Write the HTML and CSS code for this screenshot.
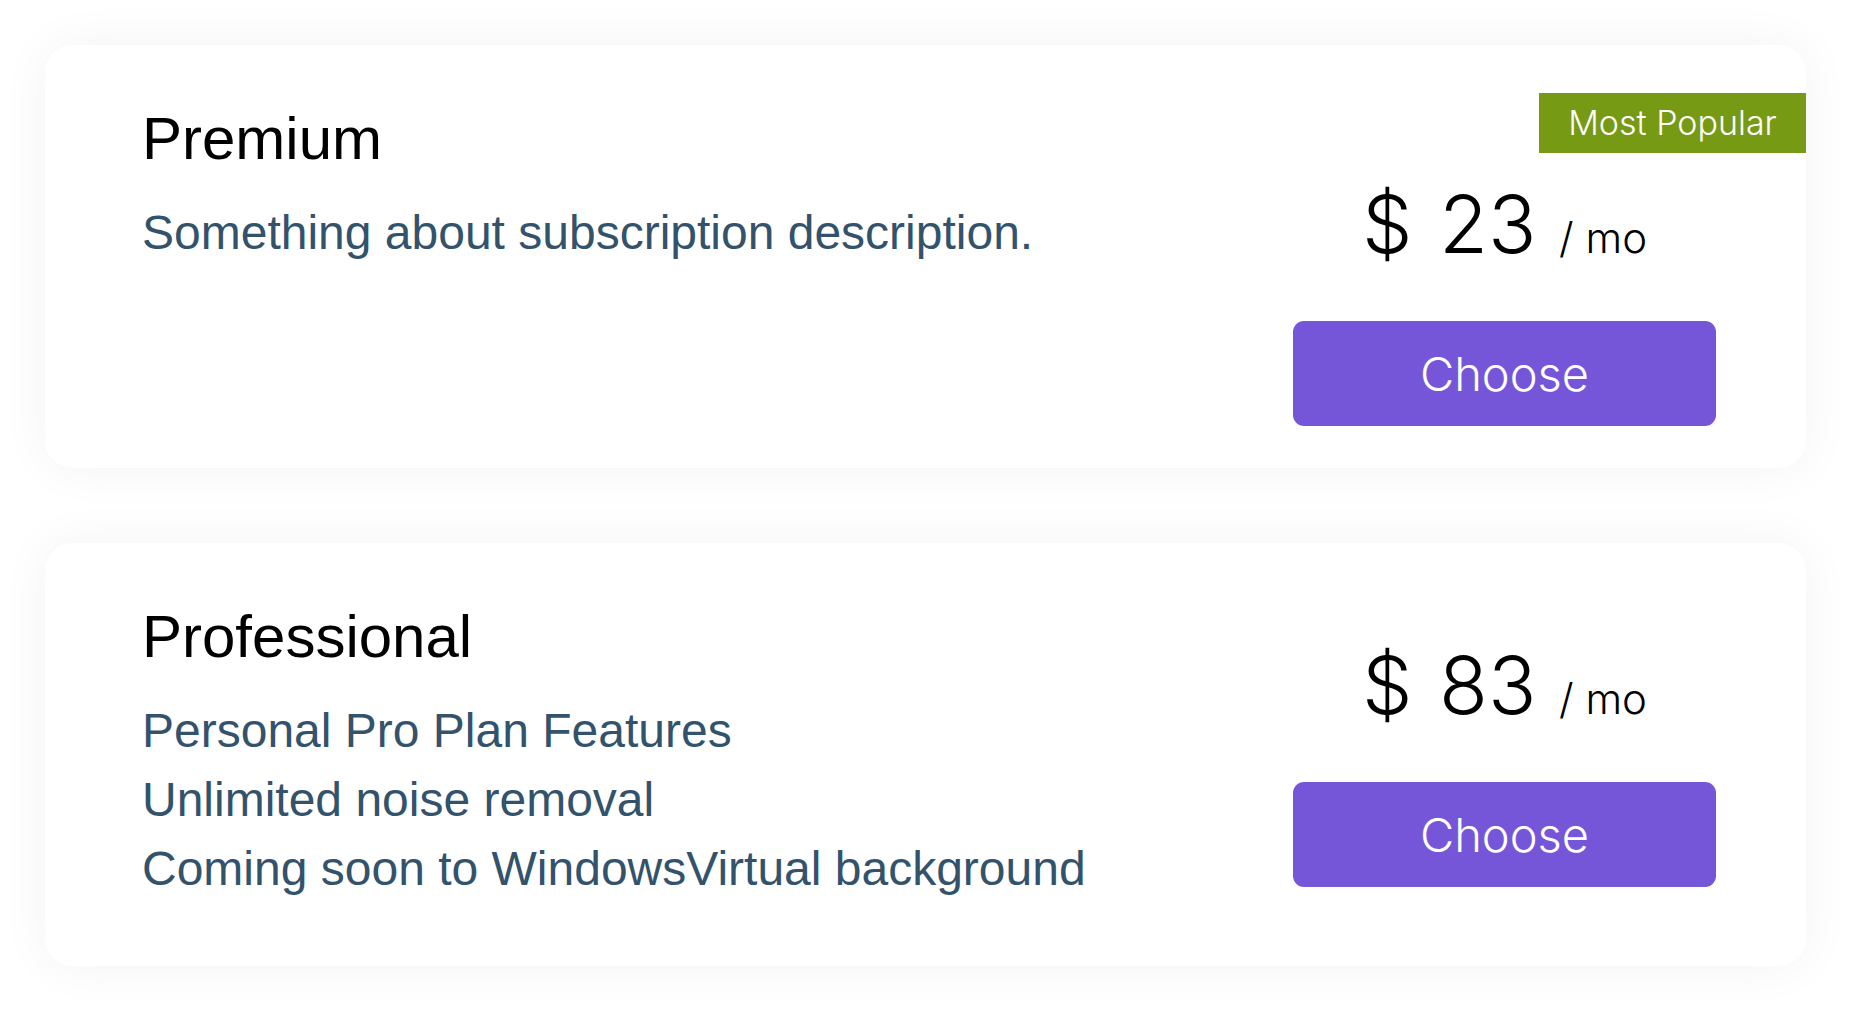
FILE: index.html
```html
<!DOCTYPE html>
<html lang="en">
<head>
<meta charset="utf-8">
<title>Plans</title>
<link rel="stylesheet" href="styles.css">
</head>
<body>
  <main class="plans">
    <section class="card card--popular">
      <div class="plan-info">
        <h2 class="plan-title">Premium</h2>
        <p class="plan-line">Something about subscription description.</p>
      </div>
      <div class="plan-side">
        <div class="price"><span class="amount">$ 23</span> <span class="per">/ mo</span></div>
        <button class="choose">Choose</button>
      </div>
      <div class="badge">Most Popular</div>
    </section>
    <section class="card">
      <div class="plan-info">
        <h2 class="plan-title">Professional</h2>
        <p class="plan-line">Personal Pro Plan Features</p>
        <p class="plan-line">Unlimited noise removal</p>
        <p class="plan-line">Coming soon to WindowsVirtual background</p>
      </div>
      <div class="plan-side">
        <div class="price"><span class="amount">$ 83</span> <span class="per">/ mo</span></div>
        <button class="choose">Choose</button>
      </div>
    </section>
  </main>
</body>
</html>
```
FILE: styles.css
```css
html, body {
  margin: 0;
  padding: 0;
  background: #ffffff;
}

body {
  font-family: "Liberation Sans", Arial, sans-serif;
  color: #000;
}

.plans {
  display: flex;
  flex-direction: column;
  gap: 75px;
  padding: 45px;
}

.card {
  position: relative;
  display: flex;
  justify-content: space-between;
  height: 423px;
  box-sizing: border-box;
  padding: 0 90px 0 97px;
  background: #fff;
  border-radius: 28px;
  box-shadow: 0 0 50px rgba(0, 0, 0, 0.05);
}

.plan-info {
  padding-top: 59px;
}

.plan-title {
  margin: 0 0 24px 0;
  font-size: 60px;
  line-height: 70px;
  font-weight: 400;
  color: #000;
}

.plan-line {
  margin: 0;
  font-size: 48px;
  line-height: 69px;
  color: #33526c;
}

.plan-side {
  width: 423px;
  display: flex;
  flex-direction: column;
  align-items: center;
  padding-top: 102px;
  box-sizing: border-box;
}

.card--popular .plan-side {
  padding-top: 139px;
}

.price {
  font-family: "Inter", "Liberation Sans", sans-serif;
  font-weight: 300;
  font-size: 80px;
  line-height: 80px;
  white-space: nowrap;
}

.amount {
  font-size: 80px;
  word-spacing: 4px;
}

.per {
  font-size: 42px;
  line-height: 1;
}

.choose {
  margin-top: 57px;
  width: 423px;
  height: 105px;
  border: 0;
  border-radius: 11px;
  background: #7656d8;
  color: #fff;
  font-family: "Inter", "Liberation Sans", sans-serif;
  font-weight: 300;
  font-size: 47px;
  padding: 0;
  cursor: pointer;
}

.badge {
  position: absolute;
  top: 48px;
  right: 0;
  width: 267px;
  height: 60px;
  background: #779a15;
  color: #fff;
  font-family: "Inter", "Liberation Sans", sans-serif;
  font-weight: 300;
  font-size: 34px;
  line-height: 60px;
  text-align: center;
}
```
